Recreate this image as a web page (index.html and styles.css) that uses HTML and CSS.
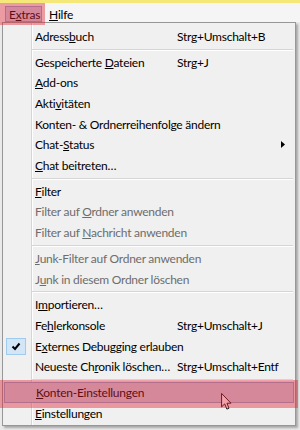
FILE: index.html
```html
<!DOCTYPE html>
<html lang="de">
<head>
  <meta charset="UTF-8" />
  <meta name="viewport" content="width=device-width, initial-scale=1.0" />
  <title>Extras</title>
  <link rel="stylesheet" href="styles.css">
</head>
<body>
  <div class="titlebar"></div>

  <div class="menubar">
    <span class="top-item open">E<u>x</u>tras</span>
    <span class="top-item"><u>H</u>ilfe</span>
  </div>

  <div class="popup">
    <div class="item"><span class="label">Adress<u>b</u>uch</span><span class="key">Strg+Umschalt+B</span></div>
    <div class="sep"></div>
    <div class="item"><span class="label">Gespeicherte <u>D</u>ateien</span><span class="key">Strg+J</span></div>
    <div class="item"><span class="label"><u>A</u>dd-ons</span></div>
    <div class="item"><span class="label">Akti<u>v</u>itäten</span></div>
    <div class="item"><span class="label">Konten- &amp; Ordnerreihenfolge ändern</span></div>
    <div class="item"><span class="label">Chat-<u>S</u>tatus</span><span class="arrow"><svg width="4" height="7" viewBox="0 0 4 7"><path d="M0 0 L4 3.5 L0 7 Z" fill="#000"/></svg></span></div>
    <div class="item"><span class="label"><u>C</u>hat beitreten…</span></div>
    <div class="sep"></div>
    <div class="item"><span class="label"><u>F</u>ilter</span></div>
    <div class="item disabled"><span class="label">Filter auf <u>O</u>rdner anwenden</span></div>
    <div class="item disabled"><span class="label">Filter auf <u>N</u>achricht anwenden</span></div>
    <div class="sep"></div>
    <div class="item disabled"><span class="label"><u>J</u>unk-Filter auf Ordner anwenden</span></div>
    <div class="item disabled"><span class="label">J<u>u</u>nk in diesem Ordner löschen</span></div>
    <div class="sep"></div>
    <div class="item"><span class="label">I<u>m</u>portieren…</span></div>
    <div class="item"><span class="label">Fe<u>h</u>lerkonsole</span><span class="key">Strg+Umschalt+J</span></div>
    <div class="item">
      <span class="check"><svg width="10" height="9" viewBox="0 0 10 9"><path d="M1.5 4.5 L4 7 L8.5 1.5" fill="none" stroke="#000" stroke-width="2"/></svg></span>
      <span class="label">E<u>x</u>ternes Debugging erlauben</span>
    </div>
    <div class="item"><span class="label">Neueste Ch<u>r</u>onik löschen…</span><span class="key">Strg+Umschalt+Entf</span></div>
    <div class="sep"></div>
    <div class="item hover"><span class="label"><u>K</u>onten-Einstellungen</span></div>
    <div class="item"><span class="label"><u>E</u>instellungen</span></div>
  </div>

  <!-- mouse pointer over the hovered entry -->
  <svg class="cursor" width="11" height="17" viewBox="0 0 12 19">
    <path d="M0.5 0.5 L0.5 15.5 L4 12.2 L6.4 18 L8.8 17 L6.5 11.4 L11 11.4 Z" fill="#fff" stroke="#000" stroke-width="1"/>
  </svg>

  <!-- red annotation boxes -->
  <div class="mark mark-extras"></div>
  <div class="mark mark-accounts"></div>
</body>
</html>
```

FILE: styles.css
```css
body {
  margin: 0;
  width: 300px;
  height: 430px;
  overflow: hidden;
  position: relative;
  background: #e9e9e9;
  font-family: "Lato", "Liberation Sans", sans-serif;
  font-size: 12px;
  letter-spacing: -0.25px;
  color: #000;
}

u {
  text-decoration: underline;
  text-underline-offset: 1px;
}

.titlebar {
  height: 3px;
  background: #f5e878;
}

/* menu bar */
.menubar {
  display: flex;
  height: 19px;
  background: #f5f5f5;
  padding-left: 5px;
  box-sizing: border-box;
}
.top-item {
  display: flex;
  align-items: center;
  height: 16px;
  margin-top: 3px;
  padding: 0 3px;
  box-sizing: border-box;
  border: 1px solid transparent;
}
.top-item.open {
  width: 37px;
  margin-right: 3px;
  background: #ced5e5;
  border-color: #93a8cd;
}

/* dropdown */
.popup {
  width: 294px;
  margin-left: 2px;
  padding: 3px 0 1px;
  box-sizing: border-box;
  border: 1px solid #979797;
  background: linear-gradient(to right, transparent 28px, #d5d5d5 28px, #d5d5d5 29px, #fff 29px, #fff 30px, transparent 30px), #f0f0f0;
  box-shadow: 2px 2px 2px rgba(0, 0, 0, 0.28);
}
.item {
  display: grid;
  grid-template-columns: 32px 142px 1fr 14px;
  align-items: center;
  height: 20.6px;
  white-space: nowrap;
}
.item .label {
  grid-column: 2;
}
.item .key {
  grid-column: 3;
}
.item .arrow {
  grid-column: 4;
  display: flex;
}
.item.disabled {
  color: #6d6d6d;
}
.item.hover {
  margin: 0 1px;
  grid-template-columns: 31px 142px 1fr 14px;
  background: #ced5e5;
  border: 1px solid #93a8cd;
  box-sizing: border-box;
}
.check {
  grid-column: 1;
  display: flex;
  align-items: center;
  justify-content: center;
  width: 20px;
  height: 17px;
  margin-left: 3px;
  box-sizing: border-box;
  background: #d2e6f7;
  border: 1px solid #9fcbee;
}
.sep {
  height: 5.4px;
  margin-left: 29px;
  margin-right: 2px;
  background: linear-gradient(to bottom, transparent 2px, #d5d5d5 2px, #d5d5d5 3px, #fff 3px, #fff 4px, transparent 4px);
}

.cursor {
  position: absolute;
  left: 221px;
  top: 393px;
}

.mark {
  position: absolute;
  background: rgba(225, 30, 50, 0.42);
}
.mark-extras {
  left: 0;
  top: 3px;
  width: 45px;
  height: 22px;
}
.mark-accounts {
  left: 0;
  top: 380px;
  width: 298px;
  height: 28px;
}
```
